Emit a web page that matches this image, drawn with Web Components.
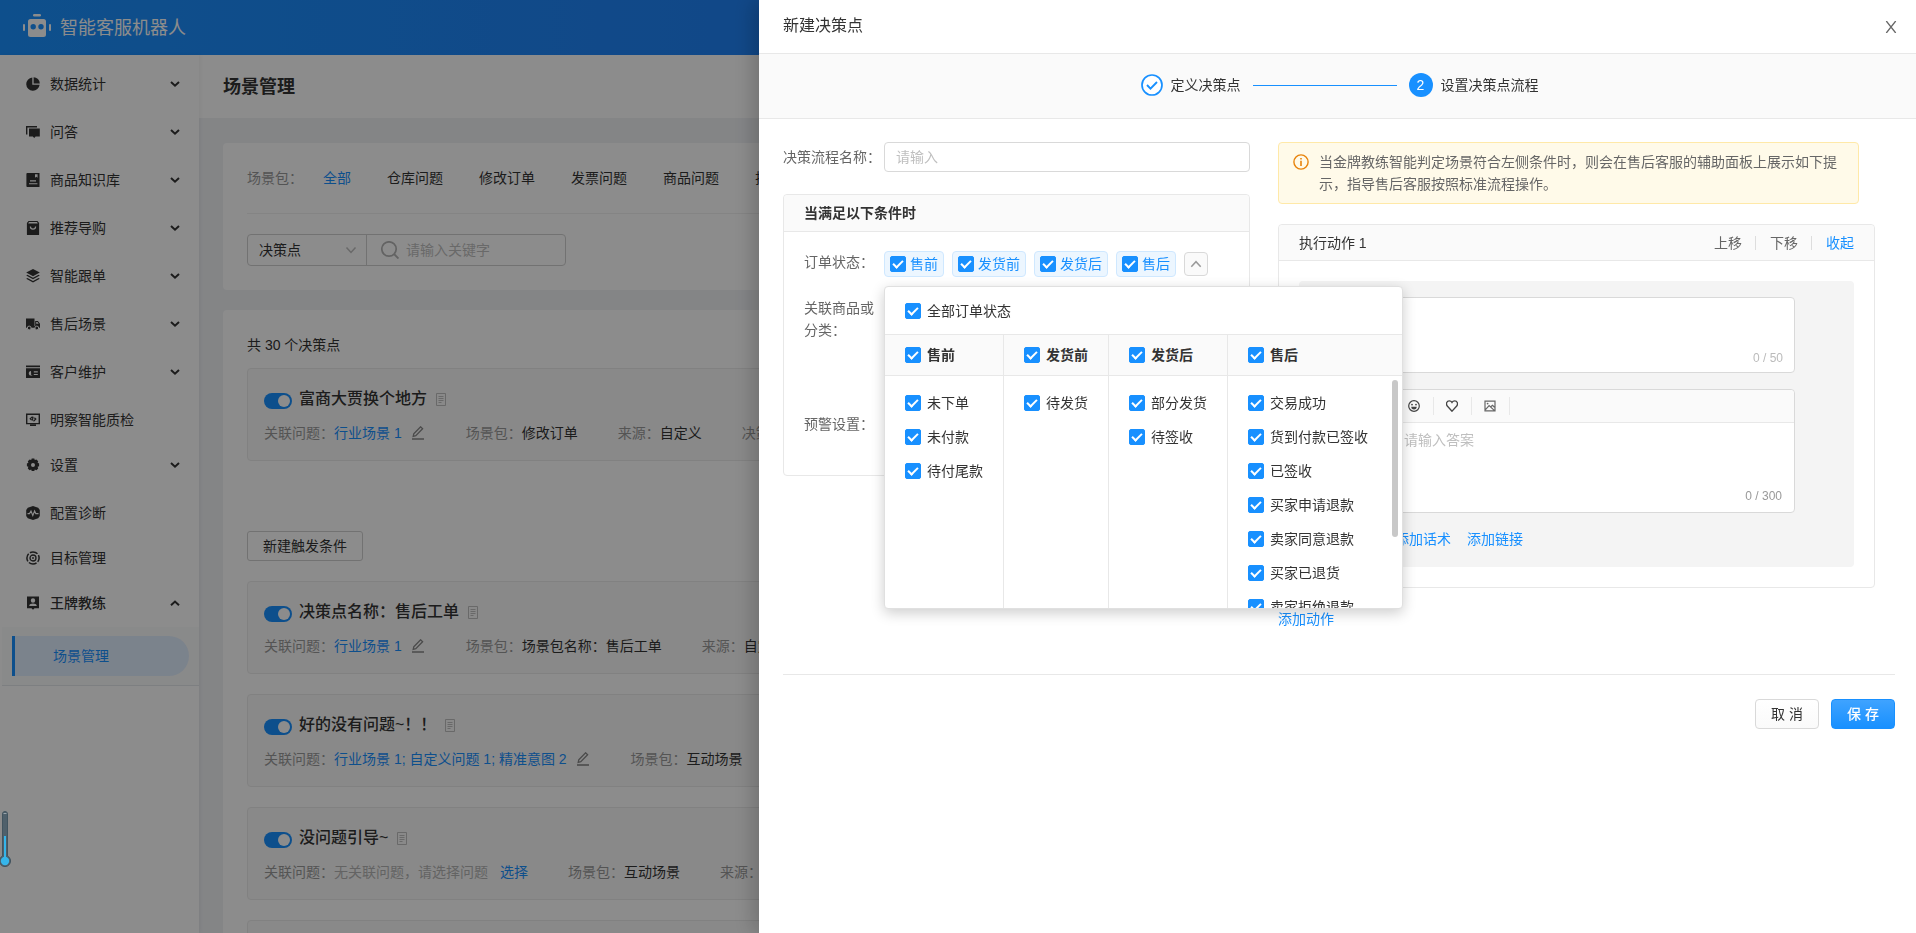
<!DOCTYPE html>
<html lang="zh-CN">
<head>
<meta charset="utf-8">
<title>智能客服机器人</title>
<style>
html, body { height: 100%; margin: 0; }
body {
  font-family: "Liberation Sans", "Noto Sans CJK SC", sans-serif;
  font-size: 14px; line-height: 22px; color: #333; overflow: hidden;
  --blue: #1890ff; --line: #e8e8e8; --muted: #999;
}
</style>
</head>
<body>
<app-shell></app-shell>
<script>
const BASE = `
*, *::before, *::after { box-sizing: border-box; }
:host { display: block; }
a { color: inherit; text-decoration: none; }
button, input, select, textarea { font: inherit; color: inherit; margin: 0; }
button { cursor: pointer; }
input::placeholder, textarea::placeholder { color: #bfbfbf; opacity: 1; }
svg { display: block; }
`;
const define = (name, markup) => {
  const tpl = document.createElement('template');
  customElements.define(name, class extends HTMLElement {
    connectedCallback() {
      if (this.shadowRoot) return;
      const root = this.attachShadow({ mode: 'open' });
      tpl.innerHTML = `<style>${BASE}</style>` + (typeof markup === 'function' ? markup(this) : markup);
      root.append(tpl.content.cloneNode(true));
    }
  });
};

/* Icon set: view box (also the drawn size) and shapes */
const ICONS = {
  robot: ['0 0 28 23', '<g fill="#fff"><rect x="10" y="0" width="8" height="2.4" rx="1.2"/><rect x="0" y="10" width="2" height="7" rx="1"/><rect x="26" y="10" width="2" height="7" rx="1"/><path fill-rule="evenodd" d="M7.500 5h13a2.500 2.500 0 0 1 2.500 2.500v13a2.500 2.500 0 0 1-2.500 2.500h-13a2.500 2.500 0 0 1-2.500-2.500v-13a2.500 2.500 0 0 1 2.500-2.500zM10.200 10a2.700 2.700 0 1 0 0 5.400 2.700 2.700 0 0 0 0-5.400zM18 10a2.700 2.700 0 1 0 0 5.400 2.700 2.700 0 0 0 0-5.400z"/></g>'],
  pie: ['0 0 14 14', '<path d="M6.300.400v7.300h7.300A6.700 6.700 0 1 1 6.300.400z"/><path d="M7.600.200a6.400 6.400 0 0 1 6.200 6.200H7.600z"/>'],
  chat: ['0 0 14 14', '<path d="M0 1h11v1.400H1.400V9.500H0z"/><path d="M3 3.500h10.800v8H9.600L8.200 13l-1.400-1.500H3z"/>'],
  book: ['0 0 14 14', '<path fill-rule="evenodd" d="M1 0h12.500v14H1a1 1 0 0 1-.6-1V1A1 1 0 0 1 1 0zM9 1.200v3.600l1.300-1 1.300 1V1.200zM4 7.300v1.100h6V7.300zM3 10.200v1.100h8.400v-1.100z"/>'],
  bag: ['0 0 14 14', '<path fill-rule="evenodd" d="M2.500 0h9l1.600 2v11.400a.6.600 0 0 1-.6.600h-11a.6.600 0 0 1-.6-.6V2zM3 1.100l-.8 1.300h9.600L11 1.100zM3.800 5.600a3.200 3.200 0 1 0 6.400 0H9a2 2 0 0 1-4 0z"/>'],
  layers: ['0 0 14 14', '<path d="M7 0l6.800 3.600L7 7.200.2 3.600z"/><path d="M.2 6.500l1.300-.7L7 8.700l5.500-2.900 1.300.7L7 10.200z"/><path d="M.2 9.800l1.300-.7L7 12l5.500-2.900 1.300.7L7 13.600z"/>'],
  truck: ['0 0 14 14', '<path d="M0 1.500h8.500v9.300H0zM9.200 4h2.700L14 6.800v4H9.200z"/><path d="M8 9h2v1.800H8z"/><circle cx="3.200" cy="11" r="1.900" fill="#333" stroke="#fff"/><circle cx="10.800" cy="11" r="1.900" fill="#333" stroke="#fff"/><path fill="#fff" d="M10.200 5h1.300l1.200 1.800h-2.500z"/>'],
  idcard: ['0 0 14 14', '<path d="M0 .5h14v1.700H0z"/><path fill-rule="evenodd" d="M0 3.300h14v9.700H0zM5 6a2.300 2.300 0 1 0 1.600 4H5.200zM7.800 6.300v1.100h4V6.300zM7.800 8.900V10h4V8.900z"/>'],
  monitor: ['0 0 14 14', '<path fill="none" stroke="#333" stroke-width="1.400" d="M.7 1.200h12.600v9.400H.7z"/><path fill="none" stroke="#333" stroke-width="1.200" d="M6.500 3.600L4.200 5.800l1.400 1.300M7.500 8.200l2.300-2.200-1.400-1.300M7 3.700v.8l-.7 3"/><path d="M4 11.300h6V13H4z"/>'],
  gear: ['0 0 14 14', '<path fill-rule="evenodd" d="M5.700.500h2.600l.5 1.500 1.600-.6 1.800 1.800-.6 1.600 1.500.6v2.800l-1.500.6.600 1.600-1.800 1.800-1.600-.6-.5 1.500H5.700l-.5-1.500-1.600.6-1.800-1.800.6-1.600L.9 8.200V5.400l1.500-.6-.6-1.600 1.800-1.800 1.600.6zM7 4.900a2 2 0 1 0 0 4 2 2 0 0 0 0-4z"/>'],
  pulse: ['0 0 14 14', '<path d="M7 0l5.200 1.800L13.800 4v6l-1.600 2.200L7 14l-5.200-1.800L.2 10V4l1.600-2.200z"/><path fill="none" stroke="#fff" stroke-width="1.100" d="M1.500 7.600h2L5 5l1.800 4.500L8.600 5l1.200 2.600h2.700"/>'],
  target: ['0 0 14 14', '<circle cx="7" cy="7" r="6.100" fill="none" stroke="#333" stroke-width="1.500" stroke-dasharray="8.100 1.500" stroke-dashoffset="4"/><circle cx="7" cy="7" r="3" fill="none" stroke="#333" stroke-width="1.300"/><circle cx="7" cy="7" r=".9"/>'],
  person: ['0 0 14 14', '<path fill-rule="evenodd" d="M1 .5h12v11.700H8.500L7 13.800l-1.500-1.600H1zM7 2.300a2.200 2.200 0 1 0 0 4.400 2.200 2.200 0 0 0 0-4.400zM3.200 10h7.600c0-1.600-2-2.400-3.800-2.400S3.200 8.400 3.200 10z"/>'],
  down: ['0 0 10 10', '<path fill="none" stroke="#333" stroke-width="2" d="M1 3l4 3.700L9 3"/>'],
  up: ['0 0 10 10', '<path fill="none" stroke="#333" stroke-width="2" d="M1 7.200l4-3.700 4 3.700"/>'],
  thinDown: ['0 0 12 12', '<path fill="none" stroke="#bfbfbf" stroke-width="1.500" d="M1.500 3.500L6 8.500l4.500-5"/>'],
  thinUp: ['0 0 12 12', '<path fill="none" stroke="#999" stroke-width="1.500" d="M1.300 8.700L6 3.700l4.700 5"/>'],
  search: ['0 0 18 18', '<circle cx="8" cy="8" r="7.200" fill="none" stroke="#b5b5b5" stroke-width="1.700"/><path stroke="#b5b5b5" stroke-width="1.900" d="M13 13l4.500 4.500"/>'],
  doc: ['0 0 10 13', '<path fill="none" stroke="#bfbfbf" d="M.5.500h9v12h-9z"/><path stroke="#bfbfbf" d="M2.500 3.500h5M2.500 5.500h5M2.500 7.500h5M2.500 9.500h3"/>'],
  pen: ['0 0 12 14', '<path fill="none" stroke="#888" stroke-width="1.300" d="M1.800 7.700L8.600.8l2 2-6.800 6.900-2.600.7z"/><path stroke="#888" stroke-width="1.600" d="M0 13h12"/>'],
  close: ['0 0 12 12', '<path fill="none" stroke="#666" stroke-width="1.300" d="M1.300 0l9.400 12M10.700 0L1.300 12"/>'],
  done: ['0 0 22 22', '<circle cx="11" cy="11" r="10" fill="#fff" stroke="#1890ff" stroke-width="1.700"/><path fill="none" stroke="#1890ff" stroke-width="1.900" d="M6 11l3.500 3.600L16 8"/>'],
  info: ['0 0 16 16', '<circle cx="8" cy="8" r="7.100" fill="none" stroke="#e8830c" stroke-width="1.400"/><path fill="#e8830c" d="M7.200 6.800h1.600v5.200H7.200zM7.200 4h1.600v1.600H7.200z"/>'],
  smile: ['0 0 12 12', '<circle cx="6" cy="6" r="5.300" fill="none" stroke="#444" stroke-width="1.200"/><circle cx="4" cy="4.600" r=".9" fill="#444"/><circle cx="8" cy="4.600" r=".9" fill="#444"/><path fill="#444" d="M3.300 6.800h5.400a2.700 2.700 0 0 1-5.400 0z"/>'],
  heart: ['0 0 12 12', '<path fill="none" stroke="#444" stroke-width="1.300" d="M6 11.200L1.500 6.300C-.6 3.700 1 .8 3.300.8 4.700.8 5.500 1.500 6 2.400c.5-.9 1.300-1.600 2.700-1.600 2.300 0 3.900 2.900 1.800 5.500z"/>'],
  image: ['0 0 12 12', '<path fill="none" stroke="#666" stroke-width="1.200" d="M1 1.100h10v9.800H1zM1.500 9.600l3.600-4 5.400 5M6.500 7l2-1.600 2 1.800"/><circle cx="3.600" cy="3.600" r=".9" fill="#666"/>'],
  meter: ['0 0 12 58', '<path fill="#4f606b" stroke="#42545f" d="M2.500 4a2.500 2.500 0 0 1 5 0v42a5.600 5.600 0 1 1-5 0z"/><path stroke="#9aa4aa" d="M3.500 3.500h3"/><path fill="#35b5ea" d="M4 26h2v22H4z"/><circle cx="5" cy="51" r="4.200" fill="#35b5ea"/>']
};
define('ui-icon', el => {
  const [box, body] = ICONS[el.getAttribute('name')];
  const [, , w, h] = box.split(' ');
  return `<style>:host{flex:none;width:${w}px;height:${h}px;display:inline-block}</style>
    <svg width="${w}" height="${h}" viewBox="${box}" fill="#333" aria-hidden="true">${body}</svg>`;
});

define('tick-box', `<style>
:host { display: block; line-height: 16px; }
label { display: flex; align-items: center; gap: var(--tick-gap, 6px); white-space: nowrap; cursor: pointer; }
input { appearance: none; flex: none; width: 16px; height: 16px; border-radius: 2px; border: 1px solid #d9d9d9; display: grid; place-items: center; }
input:checked { background: var(--blue); border-color: var(--blue); }
input:checked::before { content: ""; width: 6px; height: 10px; margin-bottom: 3px; border: solid #fff; border-width: 0 2px 2px 0; transform: rotate(45deg); }
</style><label><input type="checkbox" checked><slot></slot></label>`);

define('toggle-switch', el => `<style>
:host { width: 28px; height: 16px; flex: none; }
input { appearance: none; display: block; width: 28px; height: 16px; border-radius: 8px; background: #bfbfbf; padding: 2px; }
input::before { content: ""; display: block; width: 12px; height: 12px; border-radius: 50%; background: #fff; }
input:checked { background: var(--blue); }
input:checked::before { margin-left: 12px; }
</style><input type="checkbox" role="switch" checked aria-label="${el.getAttribute('label')}">`);

define('app-header', `<style>
:host { height: 55px; background: linear-gradient(90deg, #1b91ff, #286eec); color: #fff; display: flex; align-items: center; gap: 9px; padding: 0 23px; }
h1 { margin: 0; font-size: 18px; line-height: 26px; font-weight: 400; }
ui-icon { margin-bottom: 4px; }
</style><ui-icon name="robot"></ui-icon><h1>智能客服机器人</h1>`);

define('menu-entry', el => {
  const leaf = el.hasAttribute('leaf'), open = el.hasAttribute('open');
  const inner = `<ui-icon name="${el.getAttribute('icon')}"></ui-icon><span><slot></slot></span>`;
  return `<style>
  .row { display: flex; align-items: center; gap: 10px; width: 100%; height: 48px; padding: 0 19px 0 26px; border: 0; background: none; text-align: left; }
  a.row { height: 45px; padding-top: 3px; }
  span { flex: 1; }
  </style>` + (leaf ? `<a class="row" href="#">${inner}</a>`
    : `<button class="row" aria-expanded="${open}">${inner}<ui-icon name="${open ? 'up' : 'down'}"></ui-icon></button>`);
});

define('side-menu', `<style>
:host { width: 199px; flex: none; background: #fff; padding-top: 5px; box-shadow: 1px 0 4px rgba(0,0,0,.06); z-index: 1; }
.sub { margin-left: 2px; padding: 9px 10px; background: #fafbfc; border-bottom: 1px solid #e4e7eb; }
.sub a { display: block; height: 40px; line-height: 40px; padding-left: 38px; color: var(--blue); border-left: 3px solid var(--blue); border-radius: 0 20px 20px 0; background: #e1efff; }
.current { font-weight: 500; }
</style>
<nav>
<menu-entry icon="pie">数据统计</menu-entry>
<menu-entry icon="chat">问答</menu-entry>
<menu-entry icon="book">商品知识库</menu-entry>
<menu-entry icon="bag">推荐导购</menu-entry>
<menu-entry icon="layers">智能跟单</menu-entry>
<menu-entry icon="truck">售后场景</menu-entry>
<menu-entry icon="idcard">客户维护</menu-entry>
<menu-entry icon="monitor" leaf>明察智能质检</menu-entry>
<menu-entry icon="gear">设置</menu-entry>
<menu-entry icon="pulse" leaf>配置诊断</menu-entry>
<menu-entry icon="target" leaf>目标管理</menu-entry>
<menu-entry icon="person" class="current" open>王牌教练</menu-entry>
<div class="sub"><a href="#">场景管理</a></div>
</nav>`);

define('filter-card', `<style>
:host { background: #fff; border-radius: 4px; padding: 0 24px 24px; }
.tabs { display: flex; gap: 36px; height: 71px; align-items: center; border-bottom: 1px solid #f0f0f0; white-space: nowrap; overflow: hidden; }
.tabs span { color: var(--muted); margin-right: -16px; }
.tabs a:first-of-type { color: var(--blue); }
form { display: flex; margin-top: 20px; height: 32px; width: 319px; border: 1px solid #d0d0d0; border-radius: 4px; }
.pick { display: flex; align-items: center; width: 119px; border-right: 1px solid #d0d0d0; padding-right: 9px; }
select { appearance: none; border: 0; background: none; padding: 0 0 0 11px; flex: 1; min-width: 0; }
.find { display: flex; align-items: center; flex: 1; gap: 7px; padding-left: 14px; }
input { border: 0; background: none; padding: 0; width: 140px; }
</style>
<div class="tabs"><span>场景包：</span><a href="#">全部</a><a href="#">仓库问题</a><a href="#">修改订单</a><a href="#">发票问题</a><a href="#">商品问题</a><a href="#">排查问题</a></div>
<form><div class="pick"><select aria-label="搜索类型"><option>决策点</option></select><ui-icon name="thinDown"></ui-icon></div>
<div class="find"><ui-icon name="search"></ui-icon><input aria-label="关键字" placeholder="请输入关键字"></div></form>`);

define('decision-card', el => {
  const q = el.getAttribute('questions');
  return `<style>
  :host { height: 93px; border: 1px solid #ebebeb; border-radius: 4px; background: #fafafa; padding: 18px 16px 0; overflow: hidden; white-space: nowrap; }
  header { display: flex; align-items: center; height: 24px; }
  toggle-switch { margin: 4px 7px 0 0; }
  h3 { margin: 0 9px 0 0; font-size: 16px; line-height: 24px; font-weight: 500; }
  .facts { display: flex; gap: 40px; margin-top: 11px; height: 22px; }
  .facts > div { display: flex; }
  em { font-style: normal; color: var(--muted); }
  .none { color: #b5b5b5; margin-right: 12px; }
  a { color: var(--blue); }
  .facts ui-icon { margin: 4px 2px 0 10px; }
  </style>
  <header><toggle-switch label="启用"></toggle-switch><h3><slot></slot></h3><ui-icon name="doc"></ui-icon></header>
  <div class="facts"><div><em>关联问题：</em>${q ? `<a href="#">${q}</a><ui-icon name="pen"></ui-icon>`
    : '<span class="none">无关联问题，请选择问题</span><a href="#">选择</a>'}</div>
  <div><em>场景包：</em><span>${el.getAttribute('pack')}</span></div>
  <div><em>来源：</em><span>自定义</span></div><div><em>决策流程：</em><span>1</span></div></div>`;
});

define('decision-list', `<style>
:host { background: #fff; border-radius: 4px; padding: 24px; }
p { margin: 0 0 12px; }
decision-card + decision-card { margin-top: 20px; }
button { display: block; height: 30px; width: 116px; margin: 70px 0 20px; border: 1px solid #d0d0d0; border-radius: 3px; background: #fff; padding: 0; }
</style>
<p>共 30 个决策点</p>
<decision-card questions="行业场景 1" pack="修改订单">富商大贾换个地方</decision-card>
<button>新建触发条件</button>
<decision-card questions="行业场景 1" pack="场景包名称：售后工单">决策点名称：售后工单</decision-card>
<decision-card questions="行业场景 1; 自定义问题 1; 精准意图 2" pack="互动场景">好的没有问题~！！</decision-card>
<decision-card pack="互动场景">没问题引导~</decision-card>
<decision-card pack="互动场景">咨询问题</decision-card>`);

define('scene-page', `<style>
:host { flex: 1; min-width: 0; background: #f0f2f5; overflow: hidden; }
h2 { margin: 0; background: #fff; font-size: 18px; line-height: 26px; padding: 19px 24px 18px; font-weight: 700; }
main { padding: 25px 24px 0; display: grid; gap: 20px; }
</style><h2>场景管理</h2><main><filter-card></filter-card><decision-list></decision-list></main>`);

define('step-bar', `<style>
:host { display: flex; align-items: center; justify-content: center; height: 65px; padding: 0 0 2px 4px; background: #fafafa; border-bottom: 1px solid var(--line); }
ui-icon { margin-right: 8px; }
i { width: 144px; height: 1px; background: var(--blue); margin: 0 12px; }
b { width: 24px; height: 24px; border-radius: 50%; background: var(--blue); color: #fff; text-align: center; line-height: 24px; font-weight: 400; margin-right: 8px; }
</style><ui-icon name="done"></ui-icon><span>定义决策点</span><i></i><b>2</b><span>设置决策点流程</span>`);

define('status-column', el => {
  const items = el.getAttribute('items').split(',');
  return `<style>
  :host { display: flex; flex-direction: column; border-right: 1px solid var(--line); min-width: 0; }
  :host(:last-of-type) { flex: 1; border-right: 0; }
  .top { height: 41px; padding: 12px 20px 0; background: #fafafa; border-bottom: 1px solid var(--line); font-weight: 700; }
  .list { flex: 1; overflow: hidden; padding: 19px 20px 0; display: grid; gap: 18px; align-content: start; }
  </style><div class="top"><tick-box>${el.getAttribute('name')}</tick-box></div>
  <div class="list">${items.map(t => `<tick-box>${t}</tick-box>`).join('')}</div>`;
});

define('status-popup', `<style>
:host { width: 519px; height: 323px; background: #fff; border: 1px solid #e0e0e0; border-radius: 4px; box-shadow: 0 4px 14px rgba(0,0,0,.2); display: flex; flex-direction: column; overflow: hidden; color: #333; }
.all { height: 48px; padding: 16px 20px 0; border-bottom: 1px solid var(--line); }
.cols { display: flex; flex: 1; min-height: 0; }
.bar { position: absolute; right: 4px; top: 93px; width: 6px; height: 157px; border-radius: 3px; background: #c8c8c8; }
</style>
<div class="all"><tick-box>全部订单状态</tick-box></div>
<div class="cols">
<status-column name="售前" items="未下单,未付款,待付尾款"></status-column>
<status-column name="发货前" items="待发货"></status-column>
<status-column name="发货后" items="部分发货,待签收"></status-column>
<status-column name="售后" items="交易成功,货到付款已签收,已签收,买家申请退款,卖家同意退款,买家已退货,卖家拒绝退款"></status-column>
</div><div class="bar"></div>`);

define('status-tags', `<style>
:host { display: flex; gap: 8px; align-items: center; position: relative; }
tick-box { --tick-gap: 4px; height: 26px; padding: 4px 5px; border: 1px solid #cfe8ff; border-radius: 4px; background: #ecf6ff; color: var(--blue); }
button { display: grid; place-items: center; width: 24px; height: 24px; padding: 0; border: 1px solid #d9d9d9; border-radius: 4px; background: #fafafa; }
status-popup { position: absolute; left: 0; top: 35px; z-index: 5; }
</style>
<tick-box>售前</tick-box><tick-box>发货前</tick-box><tick-box>发货后</tick-box><tick-box>售后</tick-box>
<button aria-label="收起订单状态"><ui-icon name="thinUp"></ui-icon></button>
<status-popup></status-popup>`);

define('condition-form', `<style>
:host { color: #666; }
.name { display: flex; align-items: center; gap: 3px; height: 30px; margin-bottom: 22px; }
.name input { flex: 1; min-width: 0; height: 30px; border: 1px solid #d9d9d9; border-radius: 4px; padding: 0 11px; background: #fff; }
section { border: 1px solid var(--line); border-radius: 4px; height: 282px; }
h3 { margin: 0; height: 37px; line-height: 37px; padding: 0 20px; font-size: 14px; font-weight: 700; color: #333; background: #fafafa; border-bottom: 1px solid var(--line); border-radius: 4px 4px 0 0; }
.row { display: grid; grid-template-columns: 80px 1fr; padding-left: 20px; }
.order { margin-top: 19px; height: 26px; }
.goods { margin-top: 20px; height: 44px; }
.warn { margin-top: 72px; }
</style>
<div class="name"><label for="flow">决策流程名称：</label><input id="flow" placeholder="请输入"></div>
<section><h3>当满足以下条件时</h3>
<div class="row order"><span>订单状态：</span><status-tags></status-tags></div>
<div class="row goods"><span>关联商品或<br>分类：</span></div>
<div class="row warn"><span>预警设置：</span></div>
</section>`);

define('notice-bar', `<style>
:host { display: flex; gap: 10px; align-items: flex-start; padding: 8px 14px; border: 1px solid #ffe9a8; border-radius: 4px; background: #fffae9; color: #666; }
ui-icon { margin-top: 3px; }
</style><ui-icon name="info"></ui-icon><div><slot></slot></div>`);

define('answer-editor', `<style>
:host { background: #fff; border: 1px solid #d9d9d9; border-radius: 4px; height: 124px; display: flex; flex-direction: column; }
.tools { display: flex; align-items: center; height: 33px; background: #fafafa; border-bottom: 1px solid var(--line); border-radius: 4px 4px 0 0; }
button { width: 38px; height: 18px; display: grid; place-items: center; border: 0; border-right: 1px solid var(--line); background: none; padding: 0; }
textarea { flex: 1; border: 0; resize: none; padding: 6px 8px 0; background: none; outline: 0; min-height: 0; }
small { font-size: 12px; line-height: 20px; color: #999; text-align: right; padding: 0 12px 6px 0; }
</style>
<div class="tools"><button aria-label="表情"><ui-icon name="smile"></ui-icon></button><button aria-label="收藏"><ui-icon name="heart"></ui-icon></button><button aria-label="图片"><ui-icon name="image"></ui-icon></button></div>
<textarea aria-label="答案" placeholder="请输入答案"></textarea><small>0 / 300</small>`);

define('action-panel', `<style>
:host { border: 1px solid var(--line); border-radius: 4px; }
header { display: flex; align-items: center; height: 36px; padding: 0 20px; background: #fafafa; border-bottom: 1px solid var(--line); border-radius: 4px 4px 0 0; }
h3 { margin: 0; font-size: 14px; font-weight: 400; flex: 1; }
header a { color: #666; }
header a + a { border-left: 1px solid #ddd; margin-left: 13px; padding-left: 14px; line-height: 14px; }
header a:last-child { color: var(--blue); }
.box { margin: 20px; padding: 16px 59px 16px 96px; background: #f4f4f4; border-radius: 4px; }
.title { display: flex; flex-direction: column; height: 76px; background: #fff; border: 1px solid #d9d9d9; border-radius: 4px; margin-bottom: 16px; }
.title textarea { flex: 1; min-height: 0; border: 0; resize: none; background: none; }
small { font-size: 12px; line-height: 20px; color: #bbb; text-align: right; padding: 0 11px 4px 0; }
.links { display: flex; gap: 16px; margin-top: 15px; height: 23px; color: var(--blue); }
</style>
<header><h3>执行动作 1</h3><a href="#">上移</a><a href="#">下移</a><a href="#">收起</a></header>
<div class="box">
<div class="title"><textarea aria-label="动作说明"></textarea><small>0 / 50</small></div>
<answer-editor></answer-editor>
<div class="links"><a href="#">添加话术</a><a href="#">添加链接</a></div>
</div>`);

define('side-drawer', `<style>
:host { position: fixed; left: 759px; right: 0; top: 0; bottom: 0; background: #fff; box-shadow: -6px 0 20px rgba(0,0,0,.2); overflow: auto; }
.bar { display: flex; justify-content: space-between; height: 54px; padding: 0 19px 2px 24px; align-items: center; border-bottom: 1px solid var(--line); }
h2 { margin: 0; font-size: 16px; line-height: 24px; font-weight: 400; }
.close { border: 0; background: none; padding: 4px 0 0; width: 12px; }
.cols { display: grid; grid-template-columns: 28fr 37fr; gap: 28px; padding: 23px 21px 0 24px; }
.cols > * { min-width: 0; }
notice-bar { margin-right: 36px; }
action-panel { margin: 20px 20px 20px 0; }
.add { color: var(--blue); }
footer { display: flex; justify-content: flex-end; gap: 12px; margin: 44px 21px 24px 24px; padding-top: 24px; border-top: 1px solid var(--line); }
footer button { width: 64px; height: 30px; padding: 0; border-radius: 4px; border: 1px solid #d9d9d9; background: linear-gradient(#fff, #fafafa); }
footer .save { border-color: var(--blue); background: linear-gradient(#3fa3ff, #1890ff); color: #fff; font-weight: 500; }
</style>
<div class="bar"><h2>新建决策点</h2><button class="close" aria-label="关闭"><ui-icon name="close"></ui-icon></button></div>
<step-bar></step-bar>
<div class="cols"><condition-form></condition-form>
<div><notice-bar>当金牌教练智能判定场景符合左侧条件时，则会在售后客服的辅助面板上展示如下提示，指导售后客服按照标准流程操作。</notice-bar>
<action-panel></action-panel><a class="add" href="#">添加动作</a></div></div>
<footer><button>取 消</button><button class="save">保 存</button></footer>`);

define('app-shell', `<style>
:host { display: flex; flex-direction: column; height: 100vh; overflow: hidden; }
.body { display: flex; flex: 1; min-height: 0; }
.mask { position: fixed; inset: 0; background: rgba(0,0,0,.45); z-index: 2; }
side-drawer { z-index: 3; }
.meter { position: fixed; left: 0; bottom: 65px; z-index: 4; }
</style>
<app-header></app-header>
<div class="body"><side-menu></side-menu><scene-page></scene-page></div>
<div class="mask"></div>
<side-drawer></side-drawer>
<ui-icon class="meter" name="meter"></ui-icon>`);
</script>
</body>
</html>
